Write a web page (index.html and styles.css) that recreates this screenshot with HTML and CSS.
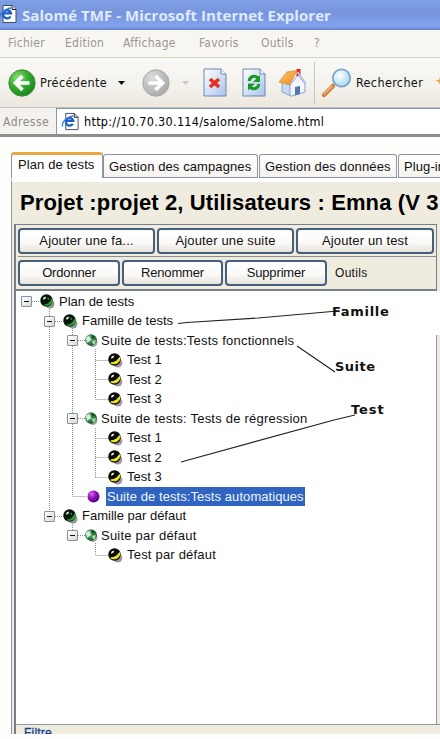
FILE: index.html
```
<!DOCTYPE html>
<html lang="fr">
<head>
<meta charset="utf-8">
<title>Salomé TMF</title>
<link rel="stylesheet" href="styles.css">
</head>
<body>
<svg class="defs" width="0" height="0">
  <defs>
    <radialGradient id="gGreen" cx=".35" cy=".3" r=".75"><stop offset="0" stop-color="#8fe07a"/><stop offset=".5" stop-color="#36ad2c"/><stop offset="1" stop-color="#188420"/></radialGradient>
    <radialGradient id="gGrey" cx=".35" cy=".3" r=".75"><stop offset="0" stop-color="#dcdcdc"/><stop offset="1" stop-color="#a8a8a8"/></radialGradient>
    <linearGradient id="gPage" x1="0" y1="0" x2="1" y2="1"><stop offset="0" stop-color="#fff"/><stop offset="1" stop-color="#a9c4ee"/></linearGradient>
    <linearGradient id="gRoof" x1="0" y1="0" x2="1" y2="1"><stop offset="0" stop-color="#ffc765"/><stop offset="1" stop-color="#e88a28"/></linearGradient>
    <radialGradient id="gLens" cx=".4" cy=".35" r=".7"><stop offset="0" stop-color="#fff"/><stop offset="1" stop-color="#9cd8f2"/></radialGradient>
    <radialGradient id="gPurple" cx=".35" cy=".3" r=".75"><stop offset="0" stop-color="#e06af0"/><stop offset=".45" stop-color="#9a12c0"/><stop offset="1" stop-color="#4a0268"/></radialGradient>
    <radialGradient id="gSuite" cx=".4" cy=".35" r=".7"><stop offset="0" stop-color="#8cc994"/><stop offset=".5" stop-color="#3b8c4c"/><stop offset="1" stop-color="#123f20"/></radialGradient>
  </defs>
  <symbol id="ie" viewBox="0 0 20 20">
    <path d="M5 1.500h9l4 4v13H5z" fill="#fff" stroke="#444c60"/>
    <path d="M14 1.500v4h4" fill="#cfd8ea" stroke="#222"/>
    <path d="M12.500 12.500a4 4 0 1 1 .5-3.200H5.500" fill="none" stroke="#1c5cc8" stroke-width="2.300"/>
    <path d="M2 15C-.5 12 6 5 13 4" fill="none" stroke="#2d78de" stroke-width="1.400"/>
  </symbol>
  <symbol id="family" viewBox="0 0 15 15">
    <circle cx="10" cy="10" r="4.500" fill="#8f9892"/><circle cx="6.500" cy="6.500" r="6.200" fill="#07140a"/>
    <path d="M12 4.500c1.500 4-2 8.500-8 6.500 4.500-.5 6-3 8-6.500z" fill="#2fa53c" stroke="#2fa53c" stroke-width=".6"/><path d="M7.500 4l1.500 1.500" stroke="#3a9a45" stroke-width="1.200"/>
    <path d="M3 5.500C3 3.500 4.500 2.500 6 3 6 4.500 4.500 6 3 5.500z" fill="#d9eedb"/>
  </symbol>
  <symbol id="suite" viewBox="0 0 15 15">
    <circle cx="9" cy="9.500" r="4.500" fill="#a5aaa7"/><circle cx="7" cy="7" r="5.800" fill="url(#gSuite)"/>
    <path d="M2 4.500L5 3l2 4-4 3z" fill="#d8f0da"/><path d="M8 8l4-1-1 4-2 .5z" fill="#a5dba8"/><path d="M7 1.500l4.500 2.500L8 6.500z" fill="#14502a"/>
  </symbol>
  <symbol id="test" viewBox="0 0 15 15">
    <circle cx="9.800" cy="10" r="4.500" fill="#a594a8"/><circle cx="6.500" cy="6.500" r="6.200" fill="#0b0b06"/>
    <path d="M11.600 4.500C12.500 9 8 12.500 2.800 10 7.500 9.500 9.500 7.500 11.600 4.500z" fill="#f2ee20" stroke="#f2ee20"/>
    <path d="M3 5.500C3 3.500 4.500 2.300 6.200 2.800 6 4.500 4.500 6 3 5.500z" fill="#f4f4ee"/>
  </symbol>
  <symbol id="auto" viewBox="0 0 15 15"><circle cx="7.500" cy="7.500" r="6" fill="url(#gPurple)"/></symbol>
</svg>

<header class="titlebar">
  <svg class="title-icon" viewBox="0 0 20 20"><use href="#ie"/></svg>
  <span class="title">Salomé TMF - Microsoft Internet Explorer</span>
</header>

<nav class="menubar">
  <span class="m1">Fichier</span><span class="m2">Edition</span><span class="m3">Affichage</span><span class="m4">Favoris</span><span class="m5">Outils</span><span>?</span>
</nav>

<div class="toolbar">
  <svg class="nav-icon" viewBox="0 0 28 28"><circle cx="14" cy="14" r="13.200" fill="url(#gGreen)" stroke="#4c8d45"/><path d="M14.500 7L7.500 14l7 7M8 14h13.500" fill="none" stroke="#fff" stroke-width="3.600"/></svg>
  <span class="back-label">Précédente</span>
  <svg class="caret" viewBox="0 0 7 4"><path d="M0 0h7L3.500 4z" fill="#111"/></svg>
  <svg class="nav-icon forward" viewBox="0 0 28 28"><circle cx="14" cy="14" r="13.200" fill="url(#gGrey)" stroke="#aaa"/><path d="M13.500 7l7 7-7 7M20 14H6.500" fill="none" stroke="#fff" stroke-width="3.600"/></svg>
  <svg class="caret muted" viewBox="0 0 7 4"><path d="M0 0h7L3.500 4z" fill="#ccc8c0"/></svg>
  <svg class="page-icon stop" viewBox="0 0 24 29"><path d="M1 1h17l5 5v22H1z" fill="url(#gPage)" stroke="#7385b0"/><path d="M18 1v5h5" fill="#fff" stroke="#7385b0"/><path d="M7 11l9 8M16 11l-9 8" stroke="#e6311c" stroke-width="3.600"/></svg>
  <svg class="page-icon refresh" viewBox="0 0 24 29"><path d="M1 1h17l5 5v22H1z" fill="url(#gPage)" stroke="#7385b0"/><path d="M18 1v5h5" fill="#fff" stroke="#7385b0"/><path d="M7 13c1-5 6-6 9-3" fill="none" stroke="#189a22" stroke-width="3"/><path d="M18 7v7h-7z" fill="#189a22"/><path d="M17 16c-1 5-6 6-9 3" fill="none" stroke="#189a22" stroke-width="3"/><path d="M6 22.500v-7h7z" fill="#189a22"/></svg>
  <svg class="home" viewBox="0 0 29 30"><path d="M4 14l9 3v11l-9-4z" fill="#c6d8f4" stroke="#8ba3cc"/><path d="M12 17l8-10 7 9v8l-13 4h-2z" fill="#f2f6ff" stroke="#8ba3cc"/><path d="M17 19l5-1v8l-5 1.500z" fill="#5577b4"/><path d="M18.500 1h4v7h-4z" fill="#d32c20"/><path d="M1 14L9 4l10-1.500L11.500 17z" fill="url(#gRoof)" stroke="#d98b30" stroke-width=".8"/><path d="M19.500 4L28 16" stroke="#b8c6e2" stroke-width="2"/></svg>
  <span class="separator"></span>
  <svg class="search" viewBox="0 0 30 30"><path d="M2 27l9-9" stroke="#cf8347" stroke-width="4.500" stroke-linecap="round"/><path d="M2 26l8-8" stroke="#f0b987" stroke-width="1.500"/><circle cx="19.500" cy="10" r="8.700" fill="url(#gLens)" stroke="#7ba4c6" stroke-width="1.800"/></svg>
  <span class="search-label">Rechercher</span>
  <svg class="star" viewBox="0 0 5 8"><path d="M5 0L4 3 0 3.500 4 5l1 3z" fill="#e6a43a"/></svg>
</div>

<div class="address">
  <span class="address-label">Adresse</span>
  <div class="address-field"><svg class="url-icon" viewBox="0 0 20 20"><use href="#ie"/></svg><span class="url">http://10.70.30.114/salome/Salome.html</span></div>
</div>

<main class="applet">
  <div class="tabs">
    <div class="tab active">Plan de tests</div>
    <div class="tab campaigns">Gestion des campagnes</div>
    <div class="tab data">Gestion des données</div>
    <div class="tab plugins">Plug-in</div>
  </div>
  <section class="panel">
    <h1>Projet :projet 2, Utilisateurs : Emna (V 3</h1>
    <div class="inner">
      <div class="actions">
        <div class="row"><button class="b-family">Ajouter une fa...</button><button class="b-suite">Ajouter une suite</button><button class="b-test">Ajouter un test</button></div>
        <div class="row second"><button class="b-order">Ordonner</button><button class="b-rename">Renommer</button><button class="b-delete">Supprimer</button><span class="tools">Outils</span></div>
      </div>
      <div class="tree">
        <svg class="links" viewBox="0 0 424 433" width="424" height="433">
          <g class="dots">
            <path d="M16 10.500h7M33.500 18v207M39 30.500h8M56.500 37v168M62 49.500h8M79.500 58v50M79.500 69.500h13M79.500 88.500h13M79.500 108.500h13M62 127.500h8M79.500 137v49M79.500 147.500h13M79.500 166.500h13M79.500 186.500h13M56.500 205.500h14M39 225.500h8M56.500 232v8M62 244.500h8M79.500 252v12M79.500 264.500h13"/>
          </g>
          <g class="pointer"><path d="M162 32.500l9-1L242 27l74-6.500h5M281 55l38 26M165 171L318 129l21-5"/></g>
          <path class="edge" d="M420.500 44v389"/><path class="gutter" d="M422.500 44v389"/>
        </svg>
        <div class="node l0"><i class="toggle"></i><svg class="ball"><use href="#family"/></svg><span>Plan de tests</span></div>
        <div class="node l1"><i class="toggle"></i><svg class="ball"><use href="#family"/></svg><span>Famille de tests</span></div>
        <div class="node l2"><i class="toggle"></i><svg class="ball"><use href="#suite"/></svg><span>Suite de tests:Tests fonctionnels</span></div>
        <div class="node l3"><svg class="ball"><use href="#test"/></svg><span>Test 1</span></div>
        <div class="node l3"><svg class="ball"><use href="#test"/></svg><span>Test 2</span></div>
        <div class="node l3"><svg class="ball"><use href="#test"/></svg><span>Test 3</span></div>
        <div class="node l2"><i class="toggle"></i><svg class="ball"><use href="#suite"/></svg><span>Suite de tests: Tests de régression</span></div>
        <div class="node l3"><svg class="ball"><use href="#test"/></svg><span>Test 1</span></div>
        <div class="node l3"><svg class="ball"><use href="#test"/></svg><span>Test 2</span></div>
        <div class="node l3"><svg class="ball"><use href="#test"/></svg><span>Test 3</span></div>
        <div class="node leaf"><svg class="ball"><use href="#auto"/></svg><span class="selected">Suite de tests:Tests automatiques</span></div>
        <div class="node l1"><i class="toggle"></i><svg class="ball"><use href="#family"/></svg><span>Famille par défaut</span></div>
        <div class="node l2"><i class="toggle"></i><svg class="ball"><use href="#suite"/></svg><span>Suite par défaut</span></div>
        <div class="node l3"><svg class="ball"><use href="#test"/></svg><span class="spaced">Test par défaut</span></div>
        <b class="note famille">Famille</b><b class="note suite">Suite</b><b class="note test">Test</b>
      </div>
      <div class="filter"><span>Filtre</span></div>
    </div>
  </section>
</main>
</body>
</html>
```
FILE: styles.css
```
* { box-sizing: border-box; }
html, body { margin: 0; }
body { width: 440px; height: 739px; overflow: hidden; background: #fefefd; color: #111; font: 13px/16px "Liberation Sans", sans-serif; white-space: nowrap; }
svg { display: block; flex: none; overflow: visible; }
.defs { position: absolute; }

.titlebar { height: 30px; display: flex; align-items: center; overflow: hidden; background: linear-gradient(#7f9fe4, #7795de 45%, #7f9fe8 75%, #80a4ee 88%, #6683cb); }
.title-icon { width: 20px; height: 20px; margin: 0 4px 3px -2px; }
.title { font: bold 15px/20px "Open Sans", sans-serif; letter-spacing: .05px; color: #e0eafd; }

.menubar { height: 28px; display: flex; align-items: center; padding: 0 0 2px 8px; border-bottom: 1px solid #d9d5c0; background: #f8f6f3; color: #9b978d; font: 12px/16px "DejaVu Sans Condensed", sans-serif; letter-spacing: .25px; }
.m1 { width: 57px; } .m2 { width: 58px; } .m3 { width: 76px; } .m4 { width: 62px; } .m5 { width: 53px; }

.toolbar { height: 50px; display: flex; align-items: center; padding-left: 8px; overflow: hidden; background: linear-gradient(#faf9f7, #f3f1eb 60%, #ece8de); border-bottom: 1px solid #bdc2c4; font: 12.500px/16px "DejaVu Sans Condensed", sans-serif; letter-spacing: .35px; }
.nav-icon { width: 28px; height: 28px; }
.back-label { width: 80px; padding-left: 4px; }
.caret { width: 7px; height: 4px; margin-left: 4px; }
.forward { margin-left: 17px; }
.muted { margin-left: 12px; }
.page-icon { width: 24px; height: 29px; }
.stop { margin-left: 14px; }
.refresh { margin-left: 15px; }
.home { width: 29px; height: 30px; margin-left: 12px; }
.separator { width: 1px; height: 42px; margin-left: 7px; background: #c8c6bd; }
.search { width: 30px; height: 30px; margin-left: 7px; }
.search-label { width: 78px; margin-left: 4px; }
.star { width: 5px; height: 8px; margin: 0 0 4px 3px; }

.address { height: 29px; display: flex; padding-left: 3px; background: #f4f2ee; border-bottom: 3px solid #8a8e8e; font: 12px/29px "DejaVu Sans Condensed", sans-serif; }
.address-label { width: 53px; letter-spacing: .5px; color: #8e8b84; }
.address-field { flex: 1; display: flex; align-items: center; padding-left: 4px; background: #fff; border: 1px solid #8797aa; border-right: 0; border-bottom: 0; }
.url-icon { width: 19px; height: 19px; }
.url { margin-left: 4px; font-size: 12.500px; letter-spacing: .3px; color: #000; }

.applet { padding: 15px 0 0 11px; height: 602px; }
.tabs { display: flex; align-items: flex-end; height: 26px; overflow: hidden; }
.tab { flex: none; height: 24px; padding: 4px 0 0 5px; border: 1px solid #8e969f; border-bottom-color: #8a9098; border-radius: 3px 3px 0 0; background: linear-gradient(#fff, #f4f3ef); letter-spacing: .1px; }
.tab.active { width: 92px; height: 26px; padding: 2px 0 0 6px; border-top: 3px solid #eba93f; border-bottom: 0; background: #fff; }
.campaigns { width: 155px; } .data { width: 138px; margin-left: 1px; letter-spacing: .15px; } .plugins { width: 60px; margin-left: 1px; }

.panel { height: 556px; overflow: hidden; border-left: 1px solid #8d97a3; border-top: 4px solid #fff; background: #efebdf; }
h1 { margin: 0; height: 42px; padding: 8px 0 0 8px; font: bold 22px/26px "Liberation Sans", sans-serif; letter-spacing: .13px; color: #000; }
.inner { margin-left: 2px; border-left: 2px solid #727f8d; }
.actions { width: 421px; height: 67px; padding-left: 2px; border: solid #75818c; border-width: 1px 1px 2px 0; }
.row { display: flex; align-items: center; height: 32px; gap: 2px; border-bottom: 1px solid #8b8d8f; }
.row.second { border-bottom: 0; }
button { height: 26px; padding: 0; border: 2px solid #46607c; border-radius: 4px; background: linear-gradient(#fff, #faf9f7 60%, #e6e3da); color: #111; font: 13px/20px "Liberation Sans", sans-serif; letter-spacing: .15px; }
.b-family { width: 137px; } .b-suite { width: 137px; } .b-test { width: 138px; }
.b-order { width: 102px; } .b-rename { width: 101px; } .b-delete { width: 102px; }
.row.second button { letter-spacing: -.15px; }
.tools { margin-left: 6px; font-size: 12px; letter-spacing: .3px; }

.tree { position: relative; height: 434px; padding-top: 1px; background: #fff; border-bottom: 1px solid #8b99a5; }
.links { position: absolute; left: 0; top: 0; }
.dots path { fill: none; stroke: #8c8c94; stroke-dasharray: 1 1; }
.pointer path { fill: none; stroke: #222; stroke-width: 1.200; }
.edge { stroke: #8b99a5; }
.gutter { stroke: #efebdf; stroke-width: 3; }
.node { display: flex; align-items: center; height: 19.500px; }
.l0 { padding-left: 5px; } .l1 { padding-left: 28px; } .l2 { padding-left: 51px; letter-spacing: .23px; } .l3 { padding-left: 92px; } .leaf { padding-left: 70px; letter-spacing: .07px; }
.toggle { position: relative; z-index: 1; flex: none; width: 11px; height: 11px; margin-right: 8px; border: 1px solid #8193a6; border-radius: 1px; background: linear-gradient(135deg, #fff, #dcd8cf); }
.toggle::after { content: ""; display: block; width: 5px; height: 1px; margin: 4px 2px; background: #111; }
.ball { position: relative; width: 15px; height: 15px; margin-right: 4px; }
.l2 .toggle { margin-right: 6px; }
.l2 .ball { margin-right: 2px; }
.leaf .ball { margin-right: 5px; }
.selected { height: 19px; padding: 0 1px; line-height: 19px; background: #2f65c0; color: #eef4ff; }
.spaced { letter-spacing: .2px; }
.note { position: absolute; font: bold 13px/16px "DejaVu Sans", sans-serif; letter-spacing: .7px; }
.famille { left: 316px; top: 13px; } .suite { left: 319px; top: 68px; letter-spacing: .5px; } .test { left: 335px; top: 111px; letter-spacing: .9px; }

.filter { height: 9px; overflow: hidden; padding-left: 8px; font: 12px/16px "Liberation Sans", sans-serif; letter-spacing: .2px; color: #16408c; -webkit-text-stroke: .3px #16408c; }
```
